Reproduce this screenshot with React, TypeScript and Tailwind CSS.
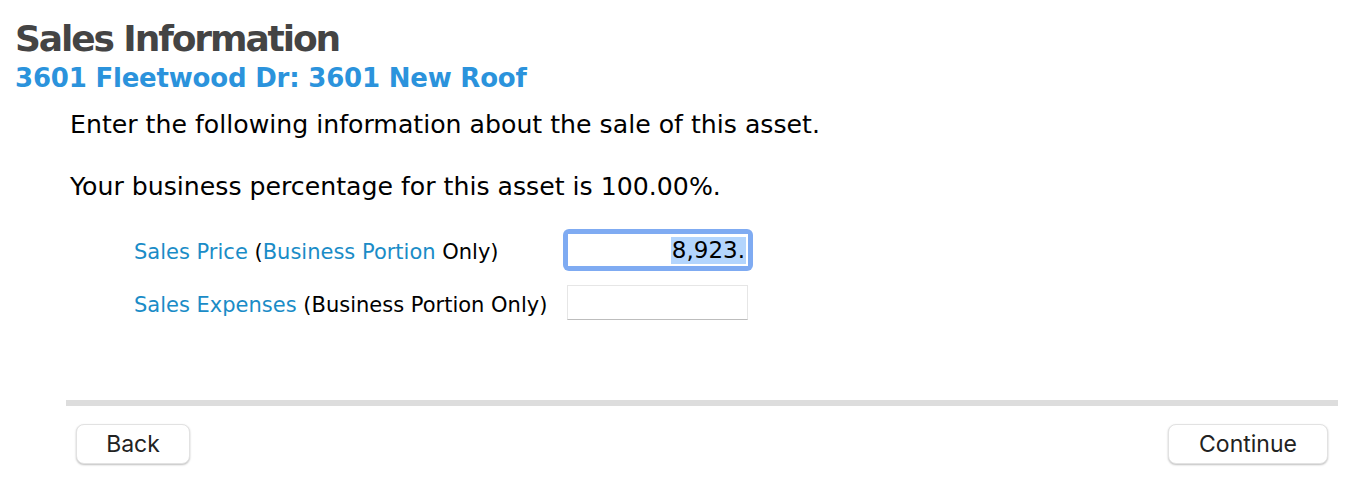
export default function App() {
  return (
    <div className="w-[1358px] h-[484px] bg-white overflow-hidden" style={{ fontFamily: '"DejaVu Sans", sans-serif' }}>
      <div className="pl-[15px] pt-[19px]">
        <h1 className="text-[36px] leading-[40px] font-bold tracking-[-2.1px] text-[#444444]">Sales Information</h1>
        <h2 className="mt-[4px] text-[26px] leading-[30px] font-bold tracking-[-0.2px] text-[#2b93dc]">3601 Fleetwood Dr: 3601 New Roof</h2>
      </div>
      <div className="pl-[70px] pt-[17px] text-[25.2px] text-black">
        <p className="leading-[30px]">Enter the following information about the sale of this asset.</p>
        <p className="leading-[30px] mt-[32px]">Your business percentage for this asset is 100.00%.</p>
      </div>
      <div className="pl-[134px] pt-[27px] text-[21px] flex flex-col gap-[14px]">
        <div className="flex items-center h-[42px]">
          <div className="w-[429px] pt-[6px]">
            <span className="text-[#1a8cc7]">Sales Price</span> (<span className="text-[#1a8cc7]">Business Portion</span> Only)
          </div>
          <div className="w-[190px] h-[42px] rounded-[6px] bg-[#7fabf2] p-[5px]">
            <div className="w-full h-full bg-white flex items-center justify-end pr-[2px] text-[23px]">
              <span className="bg-[#b3d5fd] px-[1px] leading-[27px]">8,923.</span>
            </div>
          </div>
        </div>
        <div className="flex items-center h-[35px]">
          <div className="w-[433px] pt-[6px]">
            <span className="text-[#1a8cc7]">Sales Expenses</span> (Business Portion Only)
          </div>
          <div className="w-[181px] h-[35px] border border-[#e6e6e6] border-b-[#bdbdbd]" />
        </div>
      </div>
      <div className="ml-[66px] mr-[20px] mt-[80px] h-[6px] bg-[#dddddd]" />
      <div className="flex justify-between pl-[76px] pr-[30px] pt-[18px]" style={{ fontFamily: 'Inter, "Liberation Sans", sans-serif' }}>
        <button className="w-[114px] h-[40px] rounded-[8px] bg-white border border-[#e2e2e2] shadow-[0_1px_2px_rgba(0,0,0,0.25)] text-[23px] text-[#222]">Back</button>
        <button className="w-[160px] h-[40px] rounded-[8px] bg-white border border-[#e2e2e2] shadow-[0_1px_2px_rgba(0,0,0,0.25)] text-[23px] text-[#222]">Continue</button>
      </div>
    </div>
  );
}
